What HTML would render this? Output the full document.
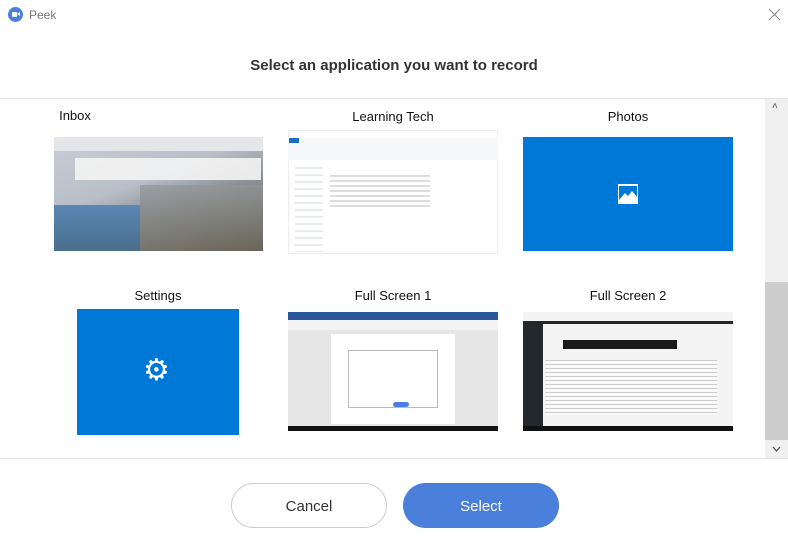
<!DOCTYPE html>
<html><head><meta charset="utf-8"><style>
*{margin:0;padding:0;box-sizing:border-box}
body{width:788px;height:552px;background:#fff;position:relative;overflow:hidden;font-family:"Liberation Sans",sans-serif}
.a{position:absolute}
.lbl{position:absolute;font-size:13px;color:#111;text-align:center;width:210px}
.blue{background:#0078d7}
</style></head><body>
<div class="a" style="left:8px;top:7px;width:15px;height:15px;border-radius:50%;background:#4a7fe0"></div>
<div class="a" style="left:12px;top:12px;width:5px;height:5px;background:#fff;border-radius:1px"></div>
<div class="a" style="left:17px;top:12px;width:0;height:0;border-top:2.5px solid transparent;border-bottom:2.5px solid transparent;border-right:3px solid #fff"></div>
<div class="a" style="left:29px;top:8px;font-size:12px;color:#777">Peek</div>
<svg class="a" style="left:768px;top:8px" width="13" height="13"><path d="M1 1L12 12M12 1L1 12" stroke="#888" stroke-width="1"/></svg>
<div class="a" style="left:0;width:788px;top:57px;text-align:center;font-size:15px;font-weight:bold;color:#333">Select an application you want to record</div>
<div class="a" style="left:0;top:98px;width:788px;height:1px;background:#e3e3e3"></div>
<div class="a" style="left:0;top:458px;width:788px;height:1px;background:#e3e3e3"></div>
<div class="a" style="left:765px;top:99px;width:23px;height:359px;background:#f0f0f0"></div>
<div class="a" style="left:765px;top:282px;width:23px;height:158px;background:#cdcdcd"></div>
<div class="a" style="left:772px;top:101px;font-size:10px;color:#555">&#708;</div>
<svg class="a" style="left:772px;top:446px" width="9" height="7"><path d="M1 1L4.5 5L8 1" stroke="#555" fill="none" stroke-width="1.3"/></svg>
<div class="lbl" style="left:-30px;top:108px">Inbox</div>
<div class="lbl" style="left:288px;top:109px">Learning Tech</div>
<div class="lbl" style="left:523px;top:109px">Photos</div>
<div class="a" style="left:54px;top:137px;width:209px;height:114px;background:linear-gradient(160deg,#c8cdd6 0%,#b9bec8 40%,#8c9096 60%,#6d7578 100%)"></div>
<div class="a" style="left:54px;top:137px;width:209px;height:14px;background:#e4e6ea"></div>
<div class="a" style="left:75px;top:158px;width:186px;height:22px;background:#f4f4f4;opacity:.9"></div>
<div class="a" style="left:54px;top:205px;width:110px;height:46px;background:linear-gradient(180deg,#5a87b4,#4a6f8c)"></div>
<div class="a" style="left:140px;top:185px;width:123px;height:66px;background:linear-gradient(170deg,#9aa0a6,#6a6558)"></div>
<div class="a" style="left:288px;top:130px;width:210px;height:124px;background:#fff;border:1px solid #eee"></div>
<div class="a" style="left:288px;top:138px;width:210px;height:22px;background:#f6f7f9"></div>
<div class="a" style="left:289px;top:138px;width:10px;height:5px;background:#1a6fc4"></div>
<div class="a" style="left:295px;top:167px;width:28px;height:85px;background:repeating-linear-gradient(180deg,#e8ebef 0 2px,#fff 2px 7px)"></div>
<div class="a" style="left:330px;top:175px;width:100px;height:32px;background:repeating-linear-gradient(180deg,#ddd 0 2px,#fff 2px 5px)"></div>
<div class="a blue" style="left:523px;top:137px;width:210px;height:114px"></div>
<svg class="a" style="left:618px;top:184px" width="20" height="20"><rect x="0" y="0" width="20" height="20" fill="#fff"/><path d="M1 2H19V13L14 7L10 12L7 9L1 16Z" fill="#0078d7"/></svg>
<div class="lbl" style="left:53px;top:288px">Settings</div>
<div class="lbl" style="left:288px;top:288px">Full Screen 1</div>
<div class="lbl" style="left:523px;top:288px">Full Screen 2</div>
<div class="a blue" style="left:77px;top:309px;width:162px;height:126px"></div>
<div class="a" style="left:143px;top:356px;font-size:30px;line-height:30px;color:#fff;font-family:'DejaVu Sans',sans-serif">&#9881;</div>
<div class="a" style="left:288px;top:312px;width:210px;height:119px;background:#e6e6e6"></div>
<div class="a" style="left:288px;top:312px;width:210px;height:8px;background:#2b579a"></div>
<div class="a" style="left:288px;top:320px;width:210px;height:10px;background:#f3f3f3"></div>
<div class="a" style="left:331px;top:334px;width:124px;height:90px;background:#fff"></div>
<div class="a" style="left:348px;top:350px;width:90px;height:58px;border:1px solid #bbb;background:#fff"></div>
<div class="a" style="left:393px;top:402px;width:16px;height:5px;background:#4a7fe0;border-radius:3px"></div>
<div class="a" style="left:288px;top:426px;width:210px;height:5px;background:#111"></div>
<div class="a" style="left:523px;top:312px;width:210px;height:119px;background:#f4f4f4"></div>
<div class="a" style="left:523px;top:321px;width:210px;height:3px;background:#23282d"></div>
<div class="a" style="left:523px;top:324px;width:20px;height:102px;background:#23282d"></div>
<div class="a" style="left:563px;top:340px;width:114px;height:9px;background:#1a1a1a"></div>
<div class="a" style="left:545px;top:360px;width:172px;height:55px;background:repeating-linear-gradient(180deg,#ccc 0 1px,#fafafa 1px 4px)"></div>
<div class="a" style="left:523px;top:426px;width:210px;height:5px;background:#111"></div>
<div class="a" style="left:231px;top:483px;width:156px;height:45px;border:1px solid #ccc;border-radius:23px;font-size:15px;color:#333;text-align:center;line-height:46px">Cancel</div>
<div class="a" style="left:403px;top:483px;width:156px;height:45px;background:#4a7fdc;border-radius:23px;font-size:15px;color:#fff;text-align:center;line-height:48px">Select</div>
</body></html>
